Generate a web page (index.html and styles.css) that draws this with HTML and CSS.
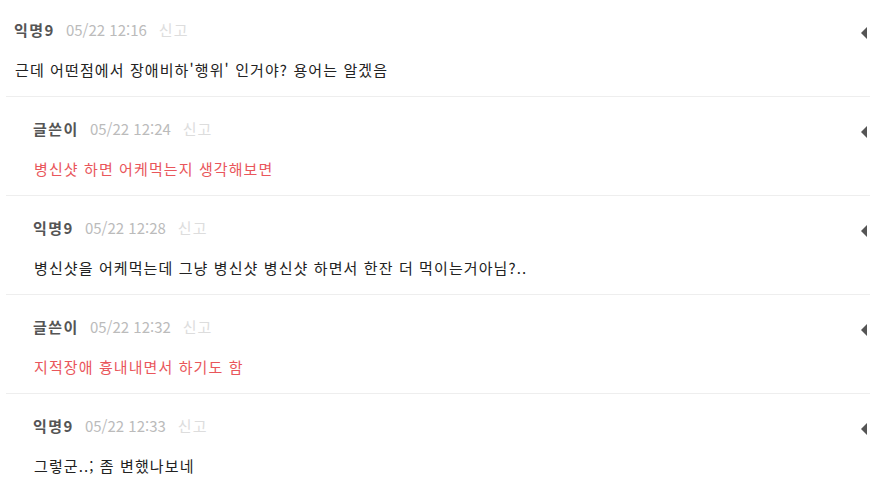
FILE: index.html
```html
<!DOCTYPE html>
<html lang="ko">
<head>
<meta charset="utf-8">
<link rel="stylesheet" href="styles.css">
</head>
<body>
<div class="comments">
  <div class="comment">
    <div class="head"><span class="name">익명9</span><span class="date">05/22 12:16</span><span class="report">신고</span><span class="caret"></span></div>
    <div class="text">근데 어떤점에서 장애비하'행위' 인거야? 용어는 알겠음</div>
  </div>
  <div class="comment reply">
    <div class="head"><span class="name">글쓴이</span><span class="date">05/22 12:24</span><span class="report">신고</span><span class="caret"></span></div>
    <div class="text author">병신샷 하면 어케먹는지 생각해보면</div>
  </div>
  <div class="comment reply">
    <div class="head"><span class="name">익명9</span><span class="date">05/22 12:28</span><span class="report">신고</span><span class="caret"></span></div>
    <div class="text">병신샷을 어케먹는데 그냥 병신샷 병신샷 하면서 한잔 더 먹이는거아님?..</div>
  </div>
  <div class="comment reply">
    <div class="head"><span class="name">글쓴이</span><span class="date">05/22 12:32</span><span class="report">신고</span><span class="caret"></span></div>
    <div class="text author">지적장애 흉내내면서 하기도 함</div>
  </div>
  <div class="comment reply last">
    <div class="head"><span class="name">익명9</span><span class="date">05/22 12:33</span><span class="report">신고</span><span class="caret"></span></div>
    <div class="text">그렇군..; 좀 변했나보네</div>
  </div>
</div>
</body>
</html>
```
FILE: styles.css
```css
html, body {
  margin: 0;
  padding: 0;
  background: #fff;
}
body {
  font-family: "Noto Sans CJK KR", "Noto Sans", sans-serif;
  font-size: 15px;
  color: #222;
}
.comments {
  margin: -2px 6px 0 6px;
}
.comment {
  padding: 22px 3px 16px 8px;
  border-bottom: 1px solid #eeeeee;
}
.comment.reply {
  padding-left: 27px;
}
.comment.last {
  border-bottom: none;
}
.head {
  display: flex;
  align-items: center;
  height: 20px;
  line-height: 20px;
}
.name {
  font-weight: bold;
  color: #555;
  letter-spacing: 1.5px;
  margin-right: 11px;
}
.date {
  color: #bbb;
  margin-right: 12px;
}
.report {
  color: #ddd;
  letter-spacing: 1px;
}
.caret {
  margin-left: auto;
  margin-top: 5px;
  width: 0;
  height: 0;
  border-top: 6px solid transparent;
  border-bottom: 6px solid transparent;
  border-right: 6px solid #555;
}
.text {
  margin-top: 20px;
  height: 20px;
  line-height: 20px;
  padding-left: 1px;
  letter-spacing: 1.1px;
}
.text.author {
  color: #e9565b;
}
```
